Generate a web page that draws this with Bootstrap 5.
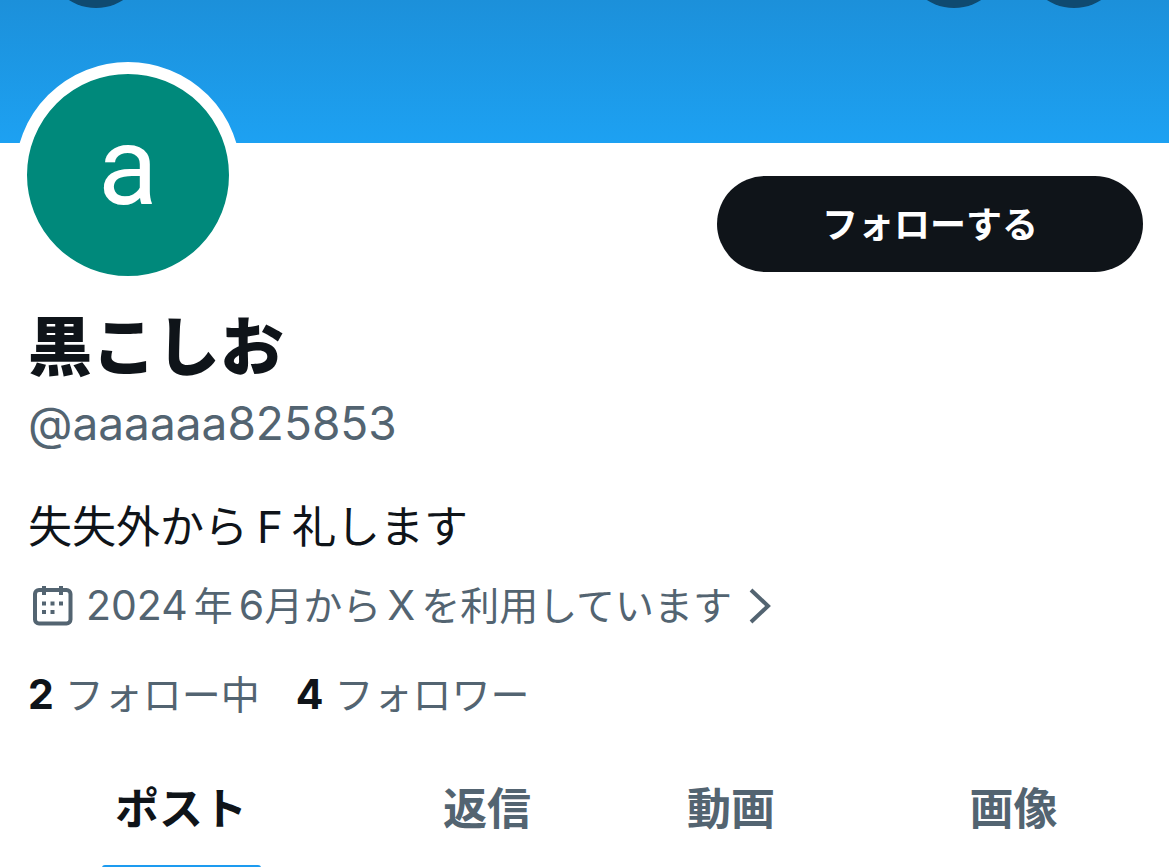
<!DOCTYPE html>
<html lang="ja">
<head>
<meta charset="utf-8">
<meta name="viewport" content="width=device-width, initial-scale=1">
<title>黒こしお (@aaaaaa825853)</title>
<link href="https://cdn.jsdelivr.net/npm/bootstrap@5.3.0/dist/css/bootstrap.min.css" rel="stylesheet">
<style>
  body { font-family: Inter, "Noto Sans CJK JP", sans-serif; color: #0f1419; background: #fff; overflow-x: hidden; }
  a { color: inherit; text-decoration: none; }
  .banner { height: 143px; padding: 0 45px 0 46px; background: linear-gradient(#1c90da, #1da1f2); overflow: hidden; }
  .round-btn { width: 100px; height: 100px; margin-top: -92px; border: 0; border-radius: 50%; background: #0f4a70; }
  .profile { padding: 0 26px 0 28px; }
  .avatar { width: 226px; height: 226px; margin: -81px 0 0 -13px; padding-bottom: 16px; border: 12px solid #fff; background: #00897b; color: #fff; font-family: Roboto, sans-serif; font-size: 110px; line-height: 1; }
  .follow-btn, .follow-btn:hover { width: 426px; height: 96px; margin-top: 33px; padding-top: 8px; background: #0f1419; color: #fff; font-size: 36px; font-weight: 700; border: 0; border-radius: 48px; }
  .name { font-size: 64px; line-height: 72px; font-weight: 900; margin-top: 23px; }
  .ink { color: #0f1419; }
  .muted { color: #536471; }
  .handle { font-size: 46px; line-height: 64px; margin-top: 8px; }
  .bio { font-size: 44px; line-height: 64px; margin-top: 40px; }
  .bio .gap-sides { margin: 0 9px; }
  .meta { font-size: 39px; line-height: 56px; }
  .joined { margin-top: 18px; }
  .cal { margin: 0 13px 0 4px; }
  .counts { margin-top: 32px; gap: 36px; }
  .num { font-size: 41px; }
  .gap-sides { margin: 0 6px; }
  .tabs { display: grid; grid-template-columns: 362fr 250fr 238fr 319fr; margin-top: 42px; }
  .tab { height: 103px; font-size: 44px; line-height: 88px; font-weight: 700; }
  .tab .bar { width: 159px; height: 3px; border-radius: 4px 4px 0 0; background: #1d9bf0; }
</style>
</head>
<body>
<header class="banner d-flex">
  <button class="round-btn" aria-label="戻る"></button>
  <button class="round-btn ms-auto me-3" aria-label="検索"></button>
  <button class="round-btn ms-1" aria-label="その他"></button>
</header>
<main>
  <section class="profile">
    <div class="d-flex justify-content-between align-items-start">
      <div class="avatar rounded-circle d-flex align-items-center justify-content-center">a</div>
      <button class="btn follow-btn">フォローする</button>
    </div>
    <h1 class="name mb-0">黒こしお</h1>
    <div class="handle muted">@aaaaaa825853</div>
    <p class="bio mb-0">失失外から<span class="gap-sides">F</span>礼します</p>
    <a href="#" class="joined meta muted d-flex align-items-center">
      <svg class="cal" width="41" height="40" viewBox="0 0 41 40" fill="none" stroke="currentColor" stroke-width="4" aria-hidden="true">
        <rect x="3" y="4" width="35.500" height="33.500" rx="4"/>
        <path d="M12 0v9M29 0v9"/>
        <path d="M10 17.500h4M18.500 17.500h4M27 17.500h4M10 26h4M18.500 26h4"/>
      </svg>
      <span><span class="num">2024</span><span class="gap-sides">年</span><span class="num">6</span>月から<span class="num gap-sides">X</span>を利用しています</span>
      <svg class="ms-3" width="24" height="36" viewBox="0 0 24 36" fill="none" stroke="currentColor" stroke-width="4" aria-hidden="true"><path d="M3 2l17 16L3 34"/></svg>
    </a>
    <div class="counts meta muted d-flex">
      <a href="#"><b class="num ink">2</b> フォロー中</a>
      <a href="#"><b class="num ink">4</b> フォロワー</a>
    </div>
  </section>
  <nav class="tabs text-center">
    <a href="#" class="tab d-flex flex-column align-items-center justify-content-between">ポスト<span class="bar"></span></a>
    <a href="#" class="tab muted">返信</a>
    <a href="#" class="tab muted">動画</a>
    <a href="#" class="tab muted ps-2">画像</a>
  </nav>
</main>
<script src="https://cdn.jsdelivr.net/npm/bootstrap@5.3.0/dist/js/bootstrap.bundle.min.js"></script>
</body>
</html>
